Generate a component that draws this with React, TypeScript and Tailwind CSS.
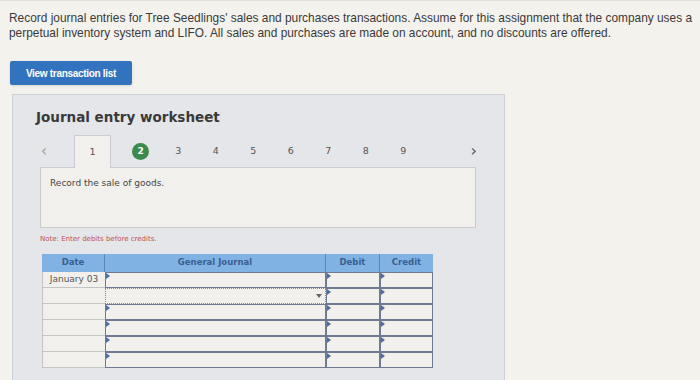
const steps = ['2', '3', '4', '5', '6', '7', '8', '9'];
const rows = ['January 03', '', '', '', '', ''];

function InputCell({ className = '' }: { className?: string }) {
  return (
    <div className={`relative border border-[#6d7a92] bg-[#f1f0ec] ${className}`}>
      <span className="absolute left-0 top-0 h-0 w-0 border-y-[3px] border-l-[4px] border-y-transparent border-l-[#4a6fa5]" />
    </div>
  );
}

export default function App() {
  return (
    <div className="h-[380px] w-[700px] overflow-hidden bg-[#f4f2ed] font-['Liberation_Sans',sans-serif]">
      <div className="border-t border-[#e2e0da] pl-[9px] pr-1 pt-[10px] text-[11.9px] leading-[15px] text-[#3a3a3a]">
        Record journal entries for Tree Seedlings' sales and purchases transactions. Assume for this assignment that the company uses a
        perpetual inventory system and LIFO. All sales and purchases are made on account, and no discounts are offered.
      </div>

      <div className="ml-[10px] mt-[20px]">
        <button className="flex h-[24px] w-[122px] items-center justify-center rounded-[2px] bg-[#3273c0] text-[10px] font-bold tracking-[-0.3px] text-white shadow-sm">
          View transaction list
        </button>
      </div>

      <div className="ml-[12px] mt-[9px] h-[290px] w-[493px] border border-[#cfd1d6] bg-[#e4e6ea] font-['DejaVu_Sans',sans-serif]">
        <div className="pl-[23px] pt-[12px] text-[13.5px] font-bold text-[#3a3a3a]">Journal entry worksheet</div>

        <div className="ml-[27px] mt-[8px] flex h-[32px] items-stretch text-[9.5px] text-[#555]">
          <div className="flex w-[34px] items-center pl-[1px] text-[15px] text-[#999]">‹</div>
          <div className="relative z-10 -mb-px flex w-[37px] items-center justify-center border border-b-0 border-[#c9cbcf] bg-[#f1f0ec]">
            1
          </div>
          <div className="w-[11px]" />
          {steps.map((s) =>
            s === '2' ? (
              <div key={s} className="flex w-[37.5px] items-center justify-center">
                <span className="flex h-[17px] w-[17px] items-center justify-center rounded-full bg-[#3d8a4e] text-[9px] font-bold text-white">
                  2
                </span>
              </div>
            ) : (
              <div key={s} className="flex w-[37.5px] items-center justify-center">
                {s}
              </div>
            ),
          )}
          <div className="flex w-[55px] items-center justify-end text-[16px] text-[#555]">›</div>
        </div>

        <div className="ml-[27px] h-[61px] w-[436px] border border-[#c9cbcf] bg-[#f1f0ec] pl-[9px] pt-[9px] text-[9px] text-[#444]">
          Record the sale of goods.
        </div>

        <div className="ml-[27px] mt-[6px] text-[7px] text-[#c0504d]">Note: Enter debits before credits.</div>

        <div className="ml-[29px] mt-[9px] w-[391px] text-[8.5px]">
          <div className="flex h-[18px] bg-[#80b2e4] font-bold text-[#3a5f8f]">
            <div className="flex w-[63px] items-center justify-center border-r border-[#5c86b8]">Date</div>
            <div className="flex w-[221px] items-center justify-center border-r border-[#5c86b8]">General Journal</div>
            <div className="flex w-[54px] items-center justify-center border-r border-[#5c86b8]">Debit</div>
            <div className="flex w-[53px] items-center justify-center">Credit</div>
          </div>
          {rows.map((d, i) => (
            <div key={i} className="flex h-[16px]">
              <div className="flex w-[63px] items-center justify-center border-b border-l border-[#c4c4c4] bg-[#f1f0ec] text-[9px] text-[#555]">
                {d}
              </div>
              {i === 1 ? (
                <div className="relative w-[221px] border border-dotted border-[#7d8aa0] bg-[#f1f0ec]">
                  <span className="absolute right-[3px] top-[5px] h-0 w-0 border-x-[3px] border-t-[4px] border-x-transparent border-t-[#666]" />
                </div>
              ) : (
                <InputCell className="w-[221px]" />
              )}
              <InputCell className="w-[54px]" />
              <InputCell className="w-[53px]" />
            </div>
          ))}
        </div>
      </div>
    </div>
  );
}
